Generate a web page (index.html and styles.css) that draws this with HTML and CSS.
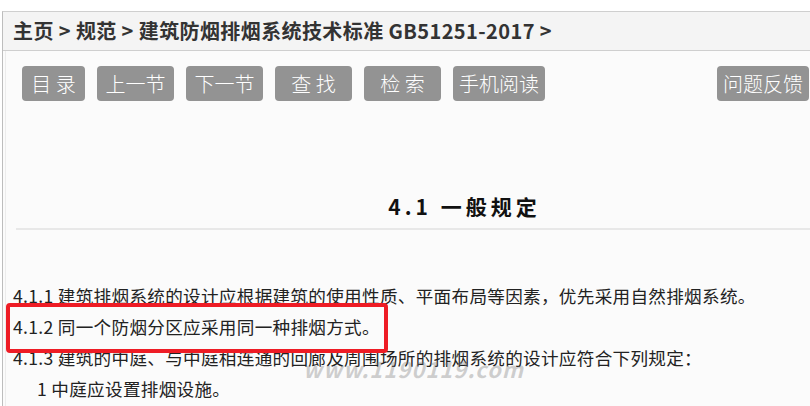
FILE: index.html
```html
<!DOCTYPE html>
<html lang="zh-CN">
<head>
  <meta charset="UTF-8" />
  <meta name="viewport" content="width=device-width, initial-scale=1.0"/>
  <title>建筑防烟排烟系统技术标准 GB51251-2017</title>
  <link rel="stylesheet" href="styles.css">
</head>
<body>

<div class="page">
  <div class="crumbs">
    主页 &gt; 规范 &gt; 建筑防烟排烟系统技术标准 GB51251-2017 &gt;
  </div>

  <div class="content">
    <div class="toolbar">
      <a class="btn btn-short" href="#">目 录</a>
      <a class="btn" href="#">上一节</a>
      <a class="btn" href="#">下一节</a>
      <a class="btn" href="#">查 找</a>
      <a class="btn" href="#">检 索</a>
      <a class="btn" href="#">手机阅读</a>
      <a class="btn btn-feedback" href="#">问题反馈</a>
    </div>

    <h2 class="title">4.1 一般规定</h2>

    <div class="article">
      <p>4.1.1 建筑排烟系统的设计应根据建筑的使用性质、平面布局等因素，优先采用自然排烟系统。</p>
      <p>4.1.2 同一个防烟分区应采用同一种排烟方式。</p>
      <p>4.1.3 建筑的中庭、与中庭相连通的回廊及周围场所的排烟系统的设计应符合下列规定：</p>
      <p class="item">1 中庭应设置排烟设施。</p>
    </div>
  </div>

  <div class="mark"></div>
  <div class="watermark">www.1190119.com</div>
</div>

</body>
</html>
```

FILE: styles.css
```css
html, body {
  overflow: hidden;
}

body {
  margin: 0;
  padding: 0;
  background: #ffffff;
  font-family: "Noto Sans CJK SC", "Noto Sans", sans-serif;
  color: #222;
}

.page {
  position: relative;
  box-sizing: border-box;
  width: 924px;
  height: 395px;
  margin: 11px 0 0 2px;
  border-top: 1px solid #cfcfcf;
  border-left: 1px solid #bdbdbd;
  background: #fbfbfb;
  overflow: hidden;
}

.crumbs {
  height: 38px;
  line-height: 38px;
  padding-left: 10px;
  background: #f4f4f4;
  border-bottom: 1px solid #cfcfcf;
  font-size: 20px;
  font-weight: bold;
  letter-spacing: 0.4px;
  color: #333;
  white-space: nowrap;
}

.content {
  margin-left: 2px;
  border-left: 1px solid #ececec;
  height: 355px;
}

.toolbar {
  display: flex;
  gap: 12px;
  padding: 15px 0 0 16px;
}

.btn {
  display: block;
  min-width: 77px;
  height: 35px;
  line-height: 35px;
  padding: 0 6px;
  box-sizing: border-box;
  border-radius: 4px;
  background: #939393;
  color: #fff;
  font-size: 20px;
  font-weight: 300;
  text-align: center;
  text-decoration: none;
  white-space: nowrap;
}

.btn-short {
  min-width: 63px;
}

.btn-feedback {
  margin-left: 160px;
}

.title {
  margin: 90px 13px 0 10px;
  padding-bottom: 7px;
  line-height: 30px;
  font-size: 21px;
  letter-spacing: 4px;
  text-align: center;
  color: #111;
  border-bottom: 2px solid #e8e8e8;
}

.article {
  margin-top: 50px;
  padding-left: 7px;
}

.article p {
  margin: 0;
  line-height: 31px;
  font-size: 17.6px;
  letter-spacing: 0.3px;
  white-space: nowrap;
}

.article .item {
  padding-left: 24px;
}

.mark {
  position: absolute;
  left: 3px;
  top: 291px;
  width: 382px;
  height: 50px;
  box-sizing: border-box;
  border: 4px solid #ee1c25;
  border-radius: 4px;
}

.watermark {
  position: absolute;
  left: 300px;
  top: 340px;
  font-size: 22px;
  font-weight: bold;
  font-style: italic;
  color: rgba(120, 120, 120, 0.35);
  letter-spacing: 1px;
}
```
